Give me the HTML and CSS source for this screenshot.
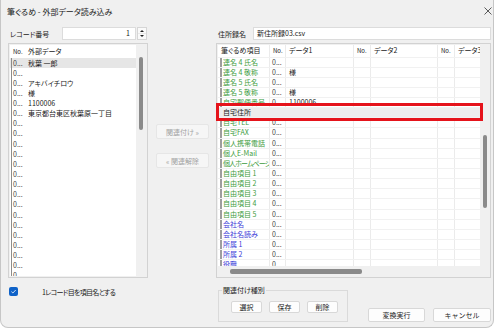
FILE: index.html
```html
<!DOCTYPE html>
<html lang="ja">
<head>
  <meta charset="UTF-8" />
  <title>筆ぐるめ - 外部データ読み込み</title>
  <link rel="stylesheet" href="styles.css">
</head>
<body>
  <div class="window">
    <!-- title bar -->
    <div class="titlebar">
      <span class="title">筆ぐるめ - 外部データ読み込み</span>
      <svg class="close" width="8" height="8" viewBox="0 0 8 8"><path d="M0.5 0.5 L7.5 7.5 M7.5 0.5 L0.5 7.5" stroke="#333" stroke-width="0.8" fill="none"/></svg>
    </div>

    <div class="content">
      <!-- record number -->
      <div class="field">
        <span class="lbl lbl-rec">レコード番号</span>
        <div class="input spin-input">1</div>
        <div class="spin">
          <svg width="8" height="11" viewBox="0 0 8 11"><path d="M2 4 L4 2 L6 4 Z" fill="#222"/><path d="M0 5.5 H8" stroke="#ddd" stroke-width="0.6"/><path d="M2 7 L4 9 L6 7 Z" fill="#222"/></svg>
        </div>
      </div>
      <div></div>
      <!-- address book name -->
      <div class="field">
        <span class="lbl lbl-book">住所録名</span>
        <div class="input book-input">新住所録03.csv</div>
      </div>

      <!-- external data list -->
      <div class="panel">
        <div class="list">
          <div class="list-head"><span class="no">No.</span><span class="data">外部データ</span></div>
          <div class="list-row sel"><span class="no">0...</span><span class="data">秋葉 一郎</span></div>
          <div class="list-row"><span class="no">0...</span><span class="data"></span></div>
          <div class="list-row"><span class="no">0...</span><span class="data">アキバイチロウ</span></div>
          <div class="list-row"><span class="no">0...</span><span class="data">様</span></div>
          <div class="list-row"><span class="no">0...</span><span class="data">1100006</span></div>
          <div class="list-row"><span class="no">0...</span><span class="data">東京都台東区秋葉原一丁目</span></div>
          <div class="list-row"><span class="no">0...</span><span class="data"></span></div>
          <div class="list-row"><span class="no">0...</span><span class="data"></span></div>
          <div class="list-row"><span class="no">0...</span><span class="data"></span></div>
          <div class="list-row"><span class="no">0...</span><span class="data"></span></div>
          <div class="list-row"><span class="no">0...</span><span class="data"></span></div>
          <div class="list-row"><span class="no">0...</span><span class="data"></span></div>
          <div class="list-row"><span class="no">0...</span><span class="data"></span></div>
          <div class="list-row"><span class="no">0...</span><span class="data"></span></div>
          <div class="list-row"><span class="no">0...</span><span class="data"></span></div>
          <div class="list-row"><span class="no">0...</span><span class="data"></span></div>
          <div class="list-row"><span class="no">0...</span><span class="data"></span></div>
          <div class="list-row"><span class="no">0...</span><span class="data"></span></div>
          <div class="list-row"><span class="no">0...</span><span class="data"></span></div>
          <div class="list-row"><span class="no">0...</span><span class="data"></span></div>
          <div class="list-row"><span class="no">0...</span><span class="data"></span></div>
          <div class="list-row"><span class="no">0...</span><span class="data"></span></div>
        </div>
        <div class="vscroll"><div class="thumb thumb-left"></div></div>
      </div>

      <!-- link / unlink -->
      <div class="mid">
        <button class="btn-mid btn-link" disabled>関連付け »</button>
        <button class="btn-mid btn-unlink" disabled>« 関連解除</button>
      </div>

      <!-- field mapping grid -->
      <div class="panel panel-right">
        <div class="grid-area">
          <div class="grid">
            <div class="grow head">
              <span class="c c-item">筆ぐるめ項目</span><span class="c c-no">No.</span><span class="c c-d1">データ1</span><span class="c c-no2">No.</span><span class="c c-d2">データ2</span><span class="c c-no2">No.</span><span class="c c-d3">データ3</span>
            </div>
            <div class="grow"><span class="c c-item g">連名 4 氏名</span><span class="c c-no">0...</span><span class="c c-d1"></span><span class="c c-no2"></span><span class="c c-d2"></span><span class="c c-no2"></span><span class="c c-d3"></span></div>
            <div class="grow"><span class="c c-item g">連名 4 敬称</span><span class="c c-no">0...</span><span class="c c-d1">様</span><span class="c c-no2"></span><span class="c c-d2"></span><span class="c c-no2"></span><span class="c c-d3"></span></div>
            <div class="grow"><span class="c c-item g">連名 5 氏名</span><span class="c c-no">0...</span><span class="c c-d1"></span><span class="c c-no2"></span><span class="c c-d2"></span><span class="c c-no2"></span><span class="c c-d3"></span></div>
            <div class="grow"><span class="c c-item g">連名 5 敬称</span><span class="c c-no">0...</span><span class="c c-d1">様</span><span class="c c-no2"></span><span class="c c-d2"></span><span class="c c-no2"></span><span class="c c-d3"></span></div>
            <div class="grow"><span class="c c-item g">自宅郵便番号</span><span class="c c-no">0...</span><span class="c c-d1">1100006</span><span class="c c-no2"></span><span class="c c-d2"></span><span class="c c-no2"></span><span class="c c-d3"></span></div>
            <div class="grow sel"><span class="c-sel">自宅住所</span></div>
            <div class="grow"><span class="c c-item g">自宅TEL</span><span class="c c-no">0...</span><span class="c c-d1"></span><span class="c c-no2"></span><span class="c c-d2"></span><span class="c c-no2"></span><span class="c c-d3"></span></div>
            <div class="grow"><span class="c c-item g">自宅FAX</span><span class="c c-no">0...</span><span class="c c-d1"></span><span class="c c-no2"></span><span class="c c-d2"></span><span class="c c-no2"></span><span class="c c-d3"></span></div>
            <div class="grow"><span class="c c-item g">個人携帯電話</span><span class="c c-no">0...</span><span class="c c-d1"></span><span class="c c-no2"></span><span class="c c-d2"></span><span class="c c-no2"></span><span class="c c-d3"></span></div>
            <div class="grow"><span class="c c-item g">個人E-Mail</span><span class="c c-no">0...</span><span class="c c-d1"></span><span class="c c-no2"></span><span class="c c-d2"></span><span class="c c-no2"></span><span class="c c-d3"></span></div>
            <div class="grow"><span class="c c-item g tight">個人ホームページ</span><span class="c c-no">0...</span><span class="c c-d1"></span><span class="c c-no2"></span><span class="c c-d2"></span><span class="c c-no2"></span><span class="c c-d3"></span></div>
            <div class="grow"><span class="c c-item g">自由項目 1</span><span class="c c-no">0...</span><span class="c c-d1"></span><span class="c c-no2"></span><span class="c c-d2"></span><span class="c c-no2"></span><span class="c c-d3"></span></div>
            <div class="grow"><span class="c c-item g">自由項目 2</span><span class="c c-no">0...</span><span class="c c-d1"></span><span class="c c-no2"></span><span class="c c-d2"></span><span class="c c-no2"></span><span class="c c-d3"></span></div>
            <div class="grow"><span class="c c-item g">自由項目 3</span><span class="c c-no">0...</span><span class="c c-d1"></span><span class="c c-no2"></span><span class="c c-d2"></span><span class="c c-no2"></span><span class="c c-d3"></span></div>
            <div class="grow"><span class="c c-item g">自由項目 4</span><span class="c c-no">0...</span><span class="c c-d1"></span><span class="c c-no2"></span><span class="c c-d2"></span><span class="c c-no2"></span><span class="c c-d3"></span></div>
            <div class="grow"><span class="c c-item g">自由項目 5</span><span class="c c-no">0...</span><span class="c c-d1"></span><span class="c c-no2"></span><span class="c c-d2"></span><span class="c c-no2"></span><span class="c c-d3"></span></div>
            <div class="grow"><span class="c c-item b">会社名</span><span class="c c-no">0...</span><span class="c c-d1"></span><span class="c c-no2"></span><span class="c c-d2"></span><span class="c c-no2"></span><span class="c c-d3"></span></div>
            <div class="grow"><span class="c c-item b">会社名読み</span><span class="c c-no">0...</span><span class="c c-d1"></span><span class="c c-no2"></span><span class="c c-d2"></span><span class="c c-no2"></span><span class="c c-d3"></span></div>
            <div class="grow"><span class="c c-item b">所属 1</span><span class="c c-no">0...</span><span class="c c-d1"></span><span class="c c-no2"></span><span class="c c-d2"></span><span class="c c-no2"></span><span class="c c-d3"></span></div>
            <div class="grow"><span class="c c-item b">所属 2</span><span class="c c-no">0...</span><span class="c c-d1"></span><span class="c c-no2"></span><span class="c c-d2"></span><span class="c c-no2"></span><span class="c c-d3"></span></div>
            <div class="grow"><span class="c c-item b">役職</span><span class="c c-no">0...</span><span class="c c-d1"></span><span class="c c-no2"></span><span class="c c-d2"></span><span class="c c-no2"></span><span class="c c-d3"></span></div>
          </div>
          <div class="vscroll vscroll-right"><div class="thumb thumb-right"></div></div>
        </div>
        <div class="hscroll"><div class="hthumb"></div></div>
        <!-- red annotation frame over the dragged row -->
        <div class="mark"></div>
      </div>

      <!-- bottom left -->
      <div class="check-row">
        <span class="checkbox">
          <svg width="9" height="9" viewBox="0 0 9 9"><path d="M2.4 4.6 L3.9 6 L6.7 3" stroke="#fff" stroke-width="0.8" fill="none"/></svg>
        </span>
        <span class="check-lbl">1レコード目を項目名とする</span>
      </div>
      <div></div>
      <!-- bottom right -->
      <div class="bottom-right">
        <fieldset class="kind">
          <legend>関連付け種別</legend>
          <div class="kind-btns">
            <button class="btn btn-small">選択</button>
            <button class="btn btn-small">保存</button>
            <button class="btn btn-small">削除</button>
          </div>
        </fieldset>
        <div class="actions">
          <button class="btn btn-run">変換実行</button>
          <button class="btn btn-cancel">キャンセル</button>
        </div>
      </div>
    </div>
  </div>
</body>
</html>
```

FILE: styles.css
```css
/* dialog window */
body {
  margin: 0;
  background: #fff;
  font-family: "Noto Sans CJK JP", "Noto Sans", sans-serif;
  font-size: 7px;
  color: #222;
  font-feature-settings: "palt";
}
* { box-sizing: border-box; }

.window {
  width: 494px; height: 328px;
  background: #f0f0f0;
  border: 1px solid #c6c6c6; border-top: 0;
  border-radius: 0 0 8px 8px;
  overflow: hidden;
  display: flex; flex-direction: column;
}
.titlebar {
  height: 22px; flex: none;
  display: flex; align-items: center; justify-content: space-between;
  padding: 0 1px 0 6px;
}
.title { font-size: 8px; color: #1a1a1a; }
.close { margin-top: -1px; }

/* main grid */
.content {
  flex: 1;
  display: grid;
  grid-template-columns: 140px 68px 275px;
  grid-template-rows: 15px 235px 1fr;
  row-gap: 2px;
  padding: 4px 0 0 7px;
}
.field { display: flex; align-items: center; }
.lbl { padding-left: 2px; }
.lbl-rec { width: 54px; }
.lbl-book { width: 37px; }
.input {
  height: 13px; background: #fff;
  border: 1px solid #dcdcdc;
  line-height: 11px;
}
.spin-input { width: 74px; text-align: right; padding-right: 5px; }
.spin {
  width: 10px; height: 13px; margin-left: 1px;
  border: 1px solid #d6d6d6; background: #fafafa;
  display: flex; align-items: center; justify-content: center;
}
.book-input { width: 238px; padding-left: 3px; }

/* bordered list panels */
.panel {
  border: 1px solid #d2d2d2;
  padding: 1px;
  display: flex;
}
.list { flex: 1; background: #fff; overflow: hidden; }
.list-head { display: flex; height: 12.5px; align-items: center; }
.list-head .no { width: 17px; padding-left: 3px; font-size: 6px; }
.list-head .data { padding-left: 1px; }
.list-row { display: flex; height: 10.15px; align-items: center; }
.list-row .no {
  width: 16px; height: 100%; margin-left: 1px;
  border-left: 1px solid #8c8c8c;
  padding-left: 1px; line-height: 10px; color: #444;
}
.list-row .data { padding-left: 1px; }
.list-row.sel { background: #e6e6e6; }

.vscroll { width: 10px; flex: none; }
.thumb { width: 4px; margin-left: 3px; background: #8a8a8a; border-radius: 2px; }
.thumb-left { margin-top: 12px; height: 73px; }

/* middle buttons */
.mid { display: flex; flex-direction: column; padding-left: 8px; }
.btn-mid {
  width: 53px; height: 15px; padding: 0;
  font-family: inherit; font-size: 7px; color: #a3a3a3;
  background: #f6f6f6; border: 1px solid #e6e6e6; border-radius: 2px;
}
.btn-link { margin-top: 81px; }
.btn-unlink { margin-top: 14px; }

/* mapping grid */
.panel-right { flex-direction: column; position: relative; }
.grid-area { display: flex; height: 221px; }
.grid { width: 262px; background: #fff; overflow: hidden; }
.grow { display: flex; height: 10.15px; border-bottom: 1px solid #f1f1f1; line-height: 9px; white-space: nowrap; }
.grow.head { height: 12.5px; line-height: 11px; }
.c { flex: none; height: 100%; border-right: 1px solid #ebebeb; overflow: hidden; }
.c-item { width: 52px; padding-left: 3px; }
.grow:not(.head) .c-item { width: 50px; margin-left: 2px; border-left: 2px solid #9d9d9d; padding-left: 1px; }
.c-item.tight { letter-spacing: -0.9px; }
.c-no { width: 16px; padding-left: 2px; color: #444; }
.c-no2 { width: 17px; padding-left: 2px; }
.head .c-no, .head .c-no2 { font-size: 6px; padding-left: 3px; color: #222; }
.c-d1 { width: 68px; padding-left: 3px; }
.c-d2 { width: 67px; padding-left: 3px; }
.c-d3 { width: 60px; padding-left: 3px; }
.g { color: #3d9c3d; }
.b { color: #3a3ad8; }
.grow.sel { background: #ededed; }
.c-sel { padding-left: 5px; color: #222; }

.vscroll-right { width: 9px; }
.thumb-right { margin-top: 90px; height: 73px; }
.hscroll { height: 10px; padding: 3px 0 0 12px; }
.hthumb { width: 132px; height: 5px; background: #8a8a8a; border-radius: 2px; }

.mark {
  position: absolute; left: -1px; top: 59px;
  width: 267px; height: 18px;
  border: 3px solid #e5131b;
}

/* bottom */
.check-row { display: flex; align-items: center; margin-top: 7px; padding-left: 1px; height: 9px; }
.checkbox {
  width: 9px; height: 9px; border-radius: 2px;
  background: #0f62c8; display: flex;
}
.check-lbl { margin-left: 24px; letter-spacing: -0.7px; }

.bottom-right { display: flex; align-items: flex-start; }
.kind {
  width: 130px; margin: 5px 0 0 2px; padding: 0;
  border: 1px solid #dadada;
}
.kind legend { margin-left: 3px; padding: 0 1px; line-height: 10px; }
.kind-btns { display: flex; gap: 7px; padding: 6px 0 8px 12px; }
.btn {
  padding: 0; font-family: inherit; font-size: 7px; color: #222;
  background: #fdfdfd; border: 1px solid #d8d8d8; border-radius: 2px;
}
.btn-small { width: 31px; height: 12px; }
.actions { display: flex; gap: 8px; margin: 28px 0 0 20px; }
.btn-run { width: 57px; height: 14px; }
.btn-cancel { width: 58px; height: 14px; }
```
